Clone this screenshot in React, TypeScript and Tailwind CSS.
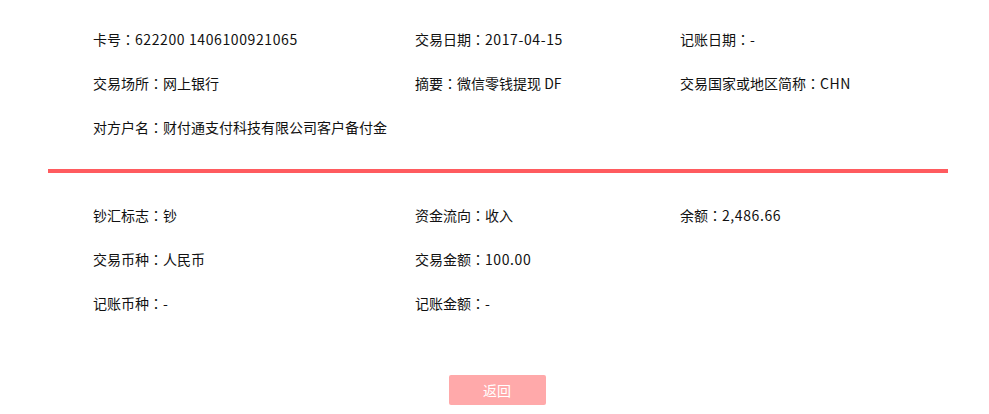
import React from "react";

const font = { fontFamily: '"Noto Sans CJK SC", "Noto Sans", sans-serif' };

type Item = [string, string, boolean?];

function Cell({ item }: { item?: Item }) {
  if (!item) return null;
  const [label, value, latin] = item;
  return (
    <span>
      {label}
      <span style={{ fontFamily: '"Noto Sans CJK JP", sans-serif' }}>：</span>
      <span className={latin ? "tracking-[0.6px]" : ""}>{value}</span>
    </span>
  );
}

function Row({ items }: { items: Item[] }) {
  return (
    <div className="flex h-[44px] items-center">
      <div className="w-[322px] shrink-0">
        <Cell item={items[0]} />
      </div>
      <div className="w-[265px] shrink-0">
        <Cell item={items[1]} />
      </div>
      <div className="flex-1">
        <Cell item={items[2]} />
      </div>
    </div>
  );
}

export default function App() {
  return (
    <div
      className="w-[989px] h-[414px] bg-white text-[14px] text-[#111] overflow-hidden"
      style={font}
    >
      <div className="ml-[48px] w-[900px]">
        <div className="pt-[17px] pl-[45px]">
          <Row
            items={[
              ["卡号", "622200 1406100921065", true],
              ["交易日期", "2017-04-15", true],
              ["记账日期", "-", true],
            ]}
          />
          <Row
            items={[
              ["交易场所", "网上银行"],
              ["摘要", "微信零钱提现 DF"],
              ["交易国家或地区简称", "CHN", true],
            ]}
          />
          <Row items={[["对方户名", "财付通支付科技有限公司客户备付金"]]} />
        </div>
        <div className="mt-[20px] h-[4px] bg-[#ff5b5f]" />
        <div className="mt-[20px] pl-[45px]">
          <Row
            items={[
              ["钞汇标志", "钞"],
              ["资金流向", "收入"],
              ["余额", "2,486.66", true],
            ]}
          />
          <Row
            items={[
              ["交易币种", "人民币"],
              ["交易金额", "100.00", true],
            ]}
          />
          <Row
            items={[
              ["记账币种", "-", true],
              ["记账金额", "-", true],
            ]}
          />
        </div>
        <div className="mt-[50px] flex justify-center">
          <button className="w-[97px] h-[30px] rounded-[2px] bg-[#ffa9aa] text-white text-[14px] -translate-x-[1px]">
            返回
          </button>
        </div>
      </div>
    </div>
  );
}
